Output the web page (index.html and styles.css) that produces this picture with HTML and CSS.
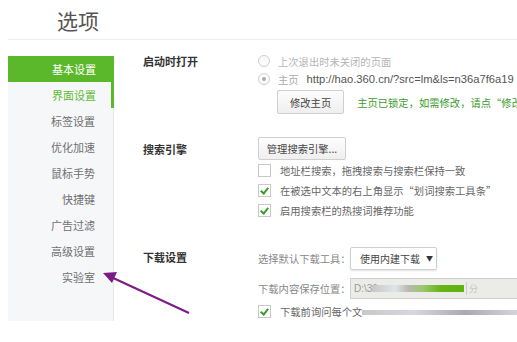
FILE: index.html
```html
<!DOCTYPE html>
<html lang="zh-CN">
<head>
    <meta charset="UTF-8">
    <title>选项</title>
    <link rel="stylesheet" href="styles.css">
</head>
<body>
    <div class="page">
        <div class="header">
            <h1 class="title">选项</h1>
        </div>

        <div class="main">
            <!-- left menu -->
            <ul class="menu">
                <li class="menu-item active">基本设置</li>
                <li class="menu-item current">界面设置</li>
                <li class="menu-item">标签设置</li>
                <li class="menu-item">优化加速</li>
                <li class="menu-item">鼠标手势</li>
                <li class="menu-item">快捷键</li>
                <li class="menu-item">广告过滤</li>
                <li class="menu-item">高级设置</li>
                <li class="menu-item">实验室</li>
            </ul>

            <div class="content">
                <!-- startup -->
                <div class="section startup">
                    <div class="label">启动时打开</div>
                    <div class="options">
                        <div class="row disabled">
                            <span class="radio"></span>
                            <span>上次退出时未关闭的页面</span>
                        </div>
                        <div class="row">
                            <span class="radio checked"></span>
                            <span class="muted">主页</span>
                            <span class="url">http://hao.360.cn/?src=lm&amp;ls=n36a7f6a19</span>
                        </div>
                        <div class="row btn-row">
                            <button class="btn">修改主页</button>
                            <span class="locked">主页已锁定，如需修改，请点“修改主页”</span>
                        </div>
                    </div>
                </div>

                <!-- search -->
                <div class="section search">
                    <div class="label">搜索引擎</div>
                    <div class="options">
                        <button class="btn wide">管理搜索引擎...</button>
                        <div class="row check-row">
                            <span class="check"></span>
                            <span>地址栏搜索，拖拽搜索与搜索栏保持一致</span>
                        </div>
                        <div class="row check-row">
                            <span class="check on"></span>
                            <span>在被选中文本的右上角显示“划词搜索工具条”</span>
                        </div>
                        <div class="row check-row">
                            <span class="check on"></span>
                            <span>启用搜索栏的热搜词推荐功能</span>
                        </div>
                    </div>
                </div>

                <!-- download -->
                <div class="section download">
                    <div class="label">下载设置</div>
                    <div class="options">
                        <div class="row field-row">
                            <span class="field-name">选择默认下载工具：</span>
                            <div class="select">使用内建下载 <span class="caret">▼</span></div>
                        </div>
                        <div class="row field-row">
                            <span class="field-name">下载内容保存位置：</span>
                            <div class="path">
                                <span class="path-text">D:\36</span>
                                <span class="path-blur"></span>
                                <span class="path-icon">分</span>
                            </div>
                        </div>
                        <div class="row check-row">
                            <span class="check on"></span>
                            <span>下载前询问每个文</span>
                            <span class="blur-line"></span>
                        </div>
                    </div>
                </div>
            </div>
        </div>

        <!-- annotation arrow -->
        <svg class="arrow" width="517" height="342" viewBox="0 0 517 342">
            <line x1="189" y1="313" x2="111" y2="277" stroke="#7b1c86" stroke-width="2.2"/>
            <polygon points="103,273 117,272 112,283" fill="#7b1c86"/>
        </svg>
    </div>
</body>
</html>
```

FILE: styles.css
```css
body {
    margin: 0;
    background: #ffffff;
    font-family: "Noto Sans CJK SC", "Liberation Sans", sans-serif;
    font-size: 11px;
    color: #555;
}
.page {
    position: relative;
    width: 517px;
    height: 342px;
    overflow: hidden;
}
.header {
    margin-left: 8px;
    height: 39px;
    border-bottom: 1px solid #eeeeee;
}
.title {
    margin: 0;
    padding: 6px 0 0 49px;
    font-size: 21px;
    font-weight: normal;
    line-height: 28px;
    color: #555;
}
.main {
    display: flex;
    padding-top: 16px;
}

/* menu */
.menu {
    list-style: none;
    flex-shrink: 0;
    margin: 0 0 0 8px;
    padding: 0 0 30px 0;
    width: 105px;
    height: 235px;
    background: #f6f7f9;
    border-right: 1px solid #e8e8e8;
}
.menu-item {
    height: 26px;
    line-height: 26px;
    padding-right: 18px;
    text-align: right;
    color: #707070;
}
.menu-item.active {
    margin-right: -1px;
    background: #5cb82b;
    color: #fff;
}
.menu-item.current {
    color: #63bb33;
    box-shadow: inset -3px 0 0 #5cb82b;
    margin-right: -1px;
}

/* content */
.content {
    flex: 1;
    min-width: 0;
    padding-left: 29px;
}
.section {
    display: flex;
}
.label {
    width: 115px;
    flex-shrink: 0;
    font-weight: bold;
    color: #333;
    line-height: 14px;
}
.options {
    flex: 1;
    white-space: nowrap;
    font-size: 10.3px;
}
.row {
    display: flex;
    align-items: center;
    height: 18px;
}
.row.disabled {
    color: #b5b5b5;
}
.startup .label {
    margin-top: -2px;
}
.startup .options {
    margin-top: -4px;
}
.radio {
    width: 10px;
    height: 10px;
    border: 1px solid #cfcfcf;
    border-radius: 50%;
    margin-right: 8px;
    position: relative;
    background: #fafafa;
    flex-shrink: 0;
}
.radio.checked::after {
    content: "";
    position: absolute;
    left: 3px;
    top: 3px;
    width: 4px;
    height: 4px;
    border-radius: 50%;
    background: #aaa;
}
.muted {
    color: #aaa;
    margin-right: 8px;
}
.url {
    font-family: "Liberation Sans", sans-serif;
    font-size: 11.2px;
    color: #555;
}
.btn-row {
    height: 24px;
    margin-top: 2px;
    padding-left: 19px;
}
.btn {
    height: 24px;
    padding: 0 12px;
    border: 1px solid #cfcfcf;
    border-radius: 2px;
    background: linear-gradient(#fdfdfd, #efefef);
    font-family: inherit;
    font-size: 10.3px;
    color: #444;
    flex-shrink: 0;
}
.locked {
    margin-left: 13px;
    color: #3a9b2c;
}

/* search */
.search {
    margin-top: 23px;
}
.search .label {
    padding-top: 5px;
}
.btn.wide {
    height: 23px;
    width: 88px;
    padding: 0;
    display: block;
    margin-bottom: 0;
}
.check-row {
    height: 20px;
    color: #666;
}
.check {
    width: 11px;
    height: 11px;
    border: 1px solid #c8c8c8;
    margin-right: 9px;
    background: #fff;
    position: relative;
    flex-shrink: 0;
}
.check.on::after {
    content: "";
    position: absolute;
    left: 3px;
    top: 1px;
    width: 3px;
    height: 6px;
    border: solid #3c9a2a;
    border-width: 0 2px 2px 0;
    transform: rotate(40deg);
}

/* download */
.download {
    margin-top: 26px;
}
.download .label {
    padding-top: 4px;
}
.field-row {
    height: 24px;
    margin-bottom: 6px;
}
.field-name {
    width: 92px;
    flex-shrink: 0;
    color: #888;
}
.select {
    display: flex;
    align-items: center;
    height: 23px;
    width: 87px;
    border: 1px solid #d0d0d0;
    border-radius: 2px;
    padding-left: 9px;
    box-sizing: border-box;
    font-size: 10px;
    color: #444;
    box-shadow: 0 1px 2px rgba(0,0,0,0.12);
    flex-shrink: 0;
}
.caret {
    font-size: 7px;
    margin-left: 6px;
    color: #333;
}
.path {
    display: flex;
    align-items: center;
    height: 19px;
    width: 180px;
    flex-shrink: 0;
    border: 1px solid #d0d0d0;
    background: #ebebe7;
    padding-left: 3px;
}
.path-text {
    color: #999;
    font-family: "Liberation Sans", sans-serif;
    font-size: 10px;
    width: 18px;
}
.path-blur {
    width: 92px;
    height: 7px;
    background: linear-gradient(90deg, #c7c7c7 0%, #dfe4e6 25%, #b8b8b0 40%, #9bc86e 55%, #66b318 75%, #5fb210 100%);
}
.path-icon {
    font-size: 9px;
    color: #c8c8c8;
    margin-left: 2px;
    border-left: 1px solid #ccc;
    padding-left: 2px;
}
.check-row .blur-line {
    flex: 1;
    height: 5px;
    margin-top: 2px;
    background: linear-gradient(90deg, #c8c8c8 0%, #d6d8dc 30%, #a9aab0 60%, #e2e4e8 100%);
}
.download .check-row {
    margin-top: -5px;
}

.arrow {
    position: absolute;
    left: 0;
    top: 0;
    pointer-events: none;
}
```
